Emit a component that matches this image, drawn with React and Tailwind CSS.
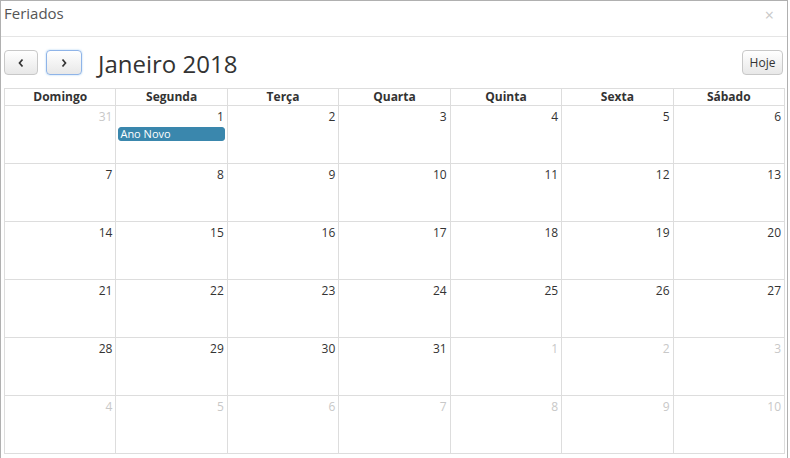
import React from 'react';

const WEEKDAYS = ['Domingo', 'Segunda', 'Terça', 'Quarta', 'Quinta', 'Sexta', 'Sábado'];

// Janeiro 2018 starts on a Monday, so the grid opens with 31 Dec
const buildWeeks = () => {
  const days = [{ n: 31, other: true }];
  for (let d = 1; d <= 31; d++) days.push({ n: d, other: false });
  let next = 1;
  while (days.length < 42) days.push({ n: next++, other: true });
  const weeks = [];
  for (let i = 0; i < 6; i++) weeks.push(days.slice(i * 7, i * 7 + 7));
  return weeks;
};

const EVENTS = { 1: 'Ano Novo' };

const Chevron = ({ dir }) => (
  <svg width="8" height="10" viewBox="0 0 8 10" fill="none">
    <path
      d={dir === 'left' ? 'M5.5 1.5 L2.5 5 L5.5 8.5' : 'M2.5 1.5 L5.5 5 L2.5 8.5'}
      stroke="#333"
      strokeWidth="1.7"
    />
  </svg>
);

const NavButton = ({ children, focused }) => (
  <button
    className={
      'h-[25px] flex items-center justify-center rounded-[4px] border bg-gradient-to-b from-white to-[#e8e8e8] ' +
      (focused
        ? 'w-[36px] border-[#8fb4e8] shadow-[0_0_2px_rgba(102,175,233,0.6)]'
        : 'w-[34px] border-[#c8c8c8]')
    }
  >
    {children}
  </button>
);

const App = () => {
  const weeks = buildWeeks();

  return (
    <div
      className="w-[788px] h-[458px] bg-white border-l border-t border-r border-[#b0b0b0] overflow-hidden text-[#333]"
      style={{ fontFamily: '"Open Sans", "Liberation Sans", sans-serif' }}
    >
      {/* Modal header */}
      <div className="h-[36px] border-b border-[#e5e5e5] flex justify-between px-[3px]">
        <span className="text-[15px] leading-[22px] text-[#555] pt-[1px]">Feriados</span>
        <span className="text-[16px] leading-[22px] text-[#c8c8c8] pr-[10px] pt-[3px]">×</span>
      </div>

      {/* Calendar body */}
      <div className="px-[3px] pt-[13px]">
        <div className="flex items-center justify-between h-[25px]">
          <div className="flex items-center">
            <NavButton>
              <Chevron dir="left" />
            </NavButton>
            <div className="ml-[8px]">
              <NavButton focused>
                <Chevron dir="right" />
              </NavButton>
            </div>
            <h2 className="ml-[16px] text-[24px] leading-[25px] text-[#333] pt-[2px]">Janeiro 2018</h2>
          </div>
          <button className="h-[25px] w-[41px] mr-[1px] rounded-[4px] border border-[#c8c8c8] bg-gradient-to-b from-white to-[#e8e8e8] text-[12px] text-[#333]">
            Hoje
          </button>
        </div>

        <div className="mt-[13px] w-[781px] border-l border-t border-[#ddd]">
          <div className="grid grid-cols-7">
            {WEEKDAYS.map(w => (
              <div
                key={w}
                className="h-[17px] border-r border-b border-[#ddd] text-center text-[12px] font-bold leading-[16px]"
              >
                {w}
              </div>
            ))}
          </div>
          {weeks.map((week, wi) => (
            <div key={wi} className="grid grid-cols-7">
              {week.map((day, di) => (
                <div key={di} className="h-[58px] border-r border-b border-[#ddd] pt-[2px]">
                  <div
                    className={
                      'text-right pr-[3px] text-[12px] leading-[17px] ' +
                      (day.other ? 'text-[#c8c8c8]' : 'text-[#333]')
                    }
                  >
                    {day.n}
                  </div>
                  {!day.other && EVENTS[day.n] && (
                    <div className="mx-[2px] mt-[2px] h-[14px] rounded-[3px] bg-[#3a87ad] border border-[#3a87ad] text-white text-[11px] leading-[12px] pl-[1px]">
                      {EVENTS[day.n]}
                    </div>
                  )}
                </div>
              ))}
            </div>
          ))}
        </div>
      </div>
    </div>
  );
};

export default App;
